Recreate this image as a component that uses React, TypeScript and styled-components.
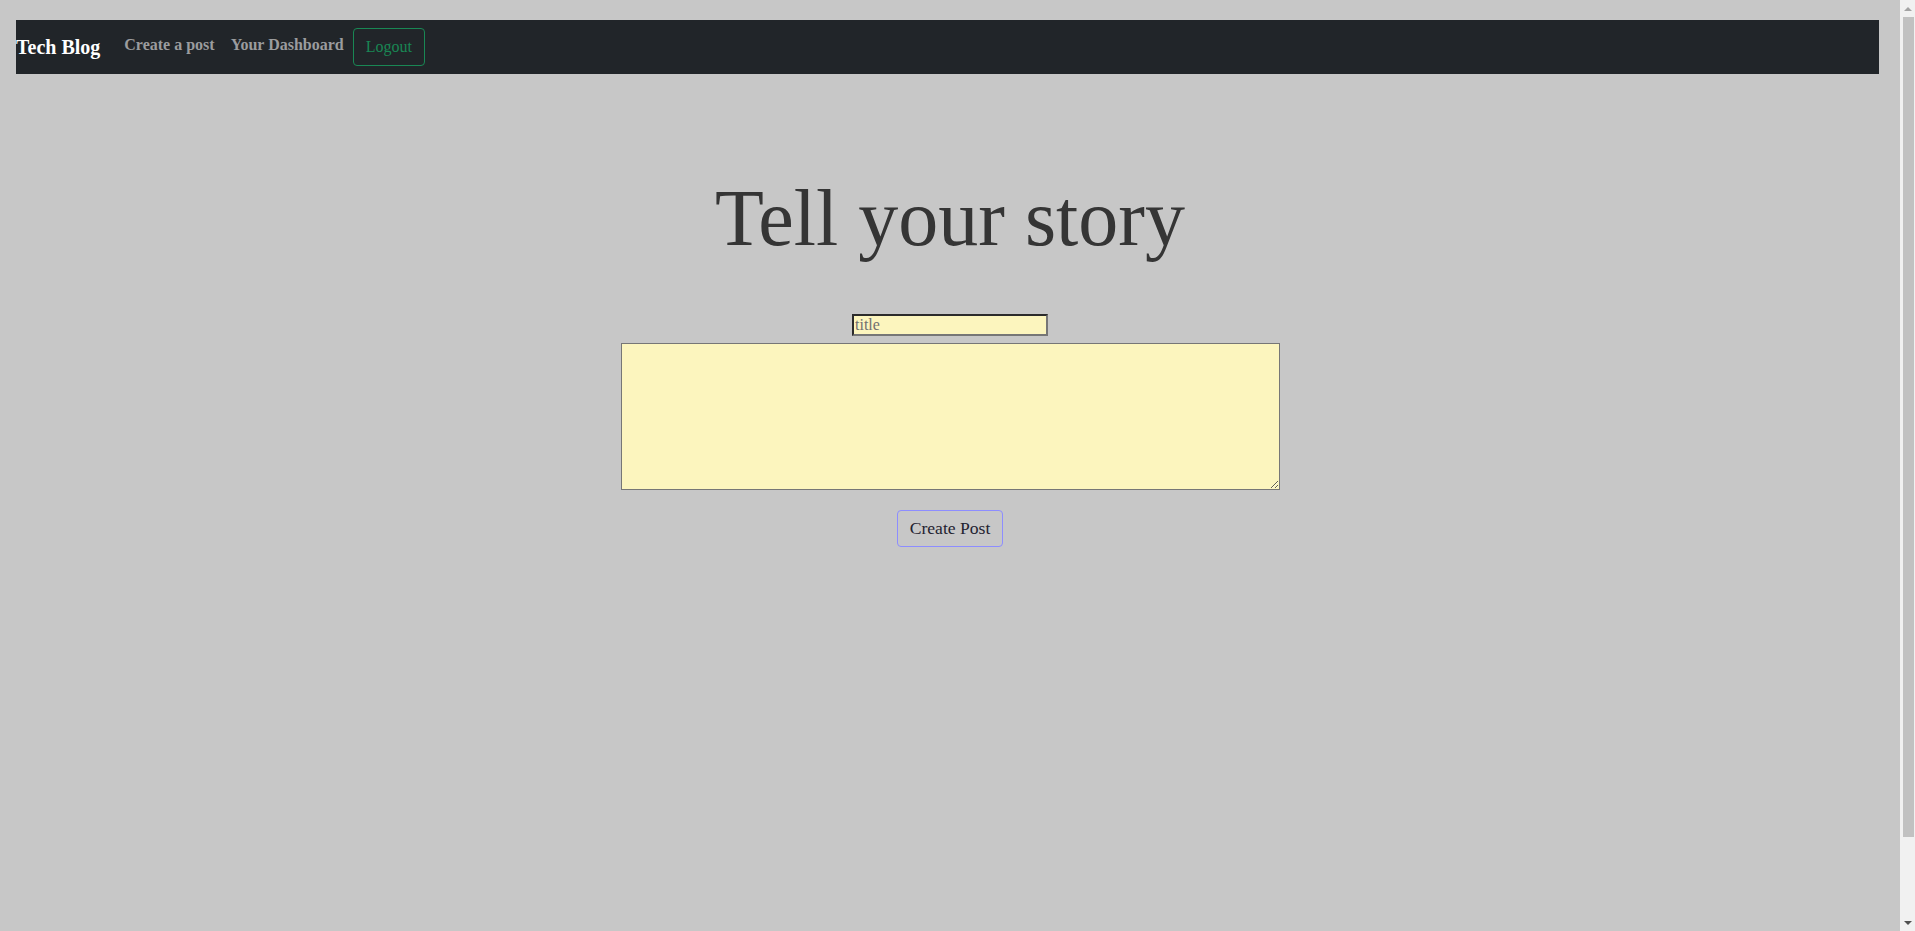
import styled, { createGlobalStyle } from "styled-components";

const GlobalStyle = createGlobalStyle`
  * {
    box-sizing: border-box;
  }
  body {
    margin: 8px 23px 8px 8px;
    background-color: #c7c7c7;
    font-family: "Liberation Serif", "Times New Roman", serif;
  }
`;

const Page = styled.div`
  min-height: 1002px;
`;

const NavBar = styled.nav`
  display: flex;
  align-items: center;
  height: 54px;
  margin: 12px 13px 0 8px;
  background-color: #212529;
`;

const Brand = styled.a`
  font-size: 20px;
  line-height: 30px;
  font-weight: bold;
  color: #ffffff;
  margin-right: 16px;
  text-decoration: none;
  cursor: pointer;
`;

const NavLink = styled.a`
  padding: 8px;
  margin-bottom: 4px;
  font-size: 16px;
  line-height: 24px;
  font-weight: bold;
  color: #9b9c9e;
  text-decoration: none;
  cursor: pointer;
`;

const LogoutBtn = styled.button`
  margin-left: 1px;
  padding: 6px 12px;
  font-family: inherit;
  font-size: 16px;
  line-height: 24px;
  color: #198754;
  background: transparent;
  border: 1px solid #198754;
  border-radius: 4px;
  cursor: pointer;
`;

const Main = styled.main`
  display: flex;
  flex-direction: column;
  align-items: center;
`;

const Heading = styled.h1`
  margin: 100px 0 51px;
  font-size: 80px;
  line-height: 89px;
  font-weight: normal;
  color: #353535;
`;

const Form = styled.form`
  display: flex;
  flex-direction: column;
  align-items: center;
`;

const TitleInput = styled.input`
  width: 196px;
  height: 22px;
  padding: 0 1px;
  font-family: inherit;
  font-size: 16px;
  background-color: #fcf5be;
  border-style: solid;
  border-width: 2px;
  border-color: #2b2b2b #767676 #767676 #2b2b2b;
  outline: none;
  &::placeholder {
    color: #707070;
  }
`;

const BodyArea = styled.textarea`
  width: 659px;
  height: 147px;
  margin-top: 7px;
  padding: 2px;
  font-family: inherit;
  font-size: 16px;
  background-color: #fcf5be;
  border: 1px solid #767676;
`;

const SubmitBtn = styled.button`
  width: 106px;
  height: 37px;
  margin-top: 20px;
  padding: 0;
  white-space: nowrap;
  font-family: inherit;
  font-size: 17.6px;
  color: #1f2230;
  background: transparent;
  border: 1px solid #8d8dff;
  border-radius: 4px;
  cursor: pointer;
`;

/* classic scrollbar look on the right edge */
const ScrollTrack = styled.div`
  position: fixed;
  top: 0;
  right: 0;
  bottom: 0;
  width: 15px;
  display: flex;
  flex-direction: column;
  align-items: center;
  background-color: #f1f1f1;
`;

const ScrollArrow = styled.div<{ $down?: boolean }>`
  height: 17px;
  width: 100%;
  display: flex;
  align-items: center;
  justify-content: center;
  &::after {
    content: "";
    border-left: 4px solid transparent;
    border-right: 4px solid transparent;
    ${(p) =>
      p.$down
        ? "border-top: 4px solid #505050;"
        : "border-bottom: 4px solid #a3a3a3;"}
  }
`;

const ScrollThumb = styled.div`
  width: 11px;
  height: 820px;
  margin-left: 1px;
  background-color: #c1c1c1;
`;

const Spacer = styled.div`
  flex: 1;
`;

export default function App() {
  return (
    <Page>
      <GlobalStyle />
      <NavBar>
        <Brand>Tech Blog</Brand>
        <NavLink>Create a post</NavLink>
        <NavLink>Your Dashboard</NavLink>
        <LogoutBtn>Logout</LogoutBtn>
      </NavBar>
      <Main>
        <Heading>Tell your story</Heading>
        <Form onSubmit={(e) => e.preventDefault()}>
          <TitleInput type="text" placeholder="title" />
          <BodyArea />
          <SubmitBtn type="submit">Create Post</SubmitBtn>
        </Form>
      </Main>
      <ScrollTrack>
        <ScrollArrow />
        <ScrollThumb />
        <Spacer />
        <ScrollArrow $down />
      </ScrollTrack>
    </Page>
  );
}
